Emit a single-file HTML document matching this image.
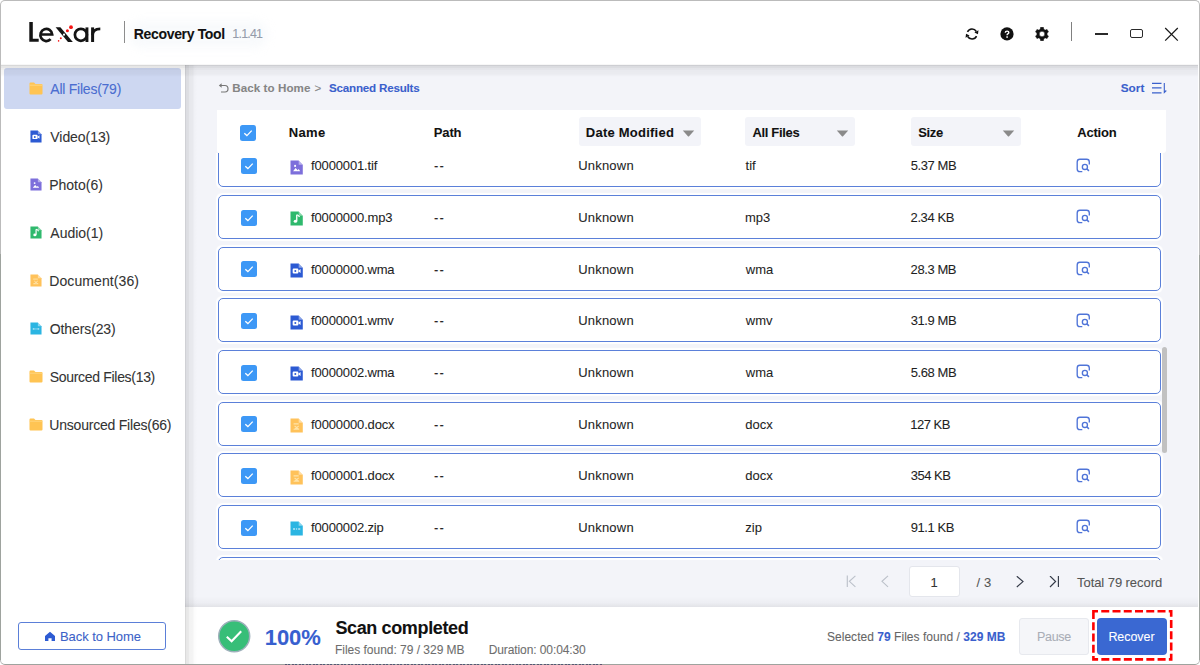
<!DOCTYPE html>
<html><head><meta charset="utf-8">
<style>
*{box-sizing:border-box;margin:0;padding:0}
html,body{width:1200px;height:665px;overflow:hidden;background:#fff;font-family:"Liberation Sans",sans-serif;color:#222}
.a{position:absolute}
div.a{-webkit-text-stroke:0.08px currentColor}
</style></head><body>
<div class="a" style="left:0;top:0;width:1200px;height:65px;background:#fff"></div>
<svg class="a" style="left:0;top:0" width="120" height="60" viewBox="0 0 120 60"><path d="M29.3 22 H32.8 V38.7 H38.7 V41.8 H29.3 Z" fill="#141414"/><path d="M40.4 34.5 H52.2 A5.9 6.1 0 1 0 50.6 39.2" stroke="#141414" stroke-width="2.7" fill="none"/><path d="M55.6 27.2 H60.4 L72.8 42 H68 Z" fill="#141414"/><circle cx="64" cy="34.7" r="1.1" fill="#fff"/><circle cx="71" cy="27.2" r="1.9" fill="#f51414"/><circle cx="67.4" cy="30.8" r="1.5" fill="#f51414"/><circle cx="60.8" cy="38.3" r="1" fill="#f51414"/><circle cx="58.6" cy="40.9" r="0.8" fill="#f51414"/><circle cx="80.9" cy="34.8" r="6" stroke="#141414" stroke-width="2.7" fill="none"/><rect x="85.5" y="27.4" width="2.9" height="14.6" fill="#141414"/><rect x="91.1" y="27.4" width="3" height="14.6" fill="#141414"/><path d="M92.6 35 Q92.6 28.8 100.3 28.8" stroke="#141414" stroke-width="2.7" fill="none"/></svg>
<div class="a" style="left:124px;top:21px;width:1px;height:22px;background:#8a8a8a"></div>
<div class="a" style="left:128px;top:21px;width:140px;height:27px;border-radius:14px;background:rgba(225,230,240,0.22);filter:blur(5px)"></div>
<div class="a" style="left:133.79px;top:23.85px;font-size:14px;line-height:20px;font-weight:700;color:#111;letter-spacing:-0.335px;white-space:nowrap;">Recovery Tool</div>
<div class="a" style="left:232.36px;top:25.37px;font-size:12.5px;line-height:18px;font-weight:400;color:#959cab;letter-spacing:-0.810px;white-space:nowrap;">1.1.41</div>
<svg class="a" style="left:965px;top:27px" width="14" height="14" viewBox="0 0 14 14"><path d="M2.47 4.89 A5.0 5.0 0 0 1 11.33 4.50" stroke="#111" stroke-width="1.5" fill="none"/><path d="M13.50 3.25 L12.93 7.27 L9.38 5.62 Z" fill="#111"/><path d="M11.53 9.11 A5.0 5.0 0 0 1 2.67 9.50" stroke="#111" stroke-width="1.5" fill="none"/><path d="M0.50 10.75 L1.07 6.73 L4.62 8.38 Z" fill="#111"/></svg>
<svg class="a" style="left:1000px;top:27px" width="14" height="14" viewBox="0 0 14 14"><circle cx="7" cy="6.9" r="6.6" fill="#111"/><path d="M5.3 5.7 Q5.3 4.1 7.1 4.1 Q8.8 4.1 8.8 5.5 Q8.8 6.4 7.8 6.9 Q7.1 7.3 7.1 8.2" stroke="#fff" stroke-width="1.45" fill="none"/><rect x="6.3" y="9.3" width="1.6" height="1.5" fill="#fff"/></svg>
<svg class="a" style="left:1035px;top:27px" width="14" height="14" viewBox="0 0 14 14"><path fill-rule="evenodd" fill="#111" stroke="#111" stroke-width="0.5" stroke-linejoin="round" d="M4.50 2.67 L5.31 2.08 L5.59 0.35 L8.41 0.35 L8.69 2.08 L9.50 2.67 L10.41 3.08 L12.05 2.45 L13.47 4.90 L12.10 6.01 L12.00 7.00 L12.10 7.99 L13.47 9.10 L12.05 11.55 L10.41 10.92 L9.50 11.33 L8.69 11.92 L8.41 13.65 L5.59 13.65 L5.31 11.92 L4.50 11.33 L3.59 10.92 L1.95 11.55 L0.53 9.10 L1.90 7.99 L2.00 7.00 L1.90 6.01 L0.53 4.90 L1.95 2.45 L3.59 3.08 Z M7 4.25 A2.75 2.75 0 1 0 7 9.75 A2.75 2.75 0 1 0 7 4.25 Z"/></svg>
<div class="a" style="left:1071px;top:22px;width:1.2px;height:19px;background:#808080"></div>
<div class="a" style="left:1095px;top:33.3px;width:13px;height:1.3px;background:#2a2a2a"></div>
<div class="a" style="left:1130px;top:29.3px;width:13.2px;height:9px;border:1.3px solid #2a2a2a;border-radius:2px"></div>
<svg class="a" style="left:1164px;top:27px" width="15" height="15" viewBox="0 0 15 15"><path d="M1.2 1 L13.8 13.6 M13.8 1 L1.2 13.6" stroke="#1a1a1a" stroke-width="1.25"/></svg>
<div class="a" style="left:0;top:65px;width:185px;height:600px;background:#fff;"></div>
<div class="a" style="left:4px;top:68px;width:177px;height:41px;background:#cdd7f1;border-radius:3px"></div>
<svg class="a" style="left:29px;top:82px" width="14" height="13" viewBox="0 0 14 13"><path d="M0.5 1.5 Q0.5 0.5 1.5 0.5 H5 L6.5 2 H12.5 Q13.5 2 13.5 3 V11.5 Q13.5 12.5 12.5 12.5 H1.5 Q0.5 12.5 0.5 11.5 Z" fill="#ffc453"/><path d="M0.5 3.2 H13.5" stroke="#ffdc8c" stroke-width="0.8"/></svg>
<div class="a" style="left:50.33px;top:79.35px;font-size:14px;line-height:20px;font-weight:400;color:#4a6dd0;letter-spacing:-0.245px;white-space:nowrap;">All Files(79)</div>
<svg class="a" style="left:30px;top:130px" width="12" height="13" viewBox="0 0 13 14" preserveAspectRatio="none"><path d="M0.5 0.5 H8.5 L12.5 4.5 V13.5 H0.5 Z" fill="#2c5ad3"/><path d="M8.5 0.5 V4.5 H12.5 Z" fill="#fff" fill-opacity="0.45"/><rect x="2.6" y="5.2" width="5.6" height="4.6" rx="1" fill="#fff"/><path d="M7.8 7.5 L10.3 5.7 V9.3 Z" fill="#fff"/><circle cx="5.2" cy="7.5" r="1" fill="#2c5ad3"/></svg>
<div class="a" style="left:50.33px;top:127.35px;font-size:14px;line-height:20px;font-weight:400;color:#333;letter-spacing:-0.062px;white-space:nowrap;">Video(13)</div>
<svg class="a" style="left:30px;top:178px" width="12" height="13" viewBox="0 0 13 14" preserveAspectRatio="none"><path d="M0.5 0.5 H8.5 L12.5 4.5 V13.5 H0.5 Z" fill="#7d6fdb"/><path d="M8.5 0.5 V4.5 H12.5 Z" fill="#fff" fill-opacity="0.45"/><path d="M3 10.5 L5.5 7.5 L7.5 9.5 L8.5 8.5 L10 10.5 Z" fill="#fff"/><circle cx="5" cy="5.5" r="1" fill="#fff"/></svg>
<div class="a" style="left:49.28px;top:175.35px;font-size:14px;line-height:20px;font-weight:400;color:#333;letter-spacing:-0.019px;white-space:nowrap;">Photo(6)</div>
<svg class="a" style="left:30px;top:226px" width="12" height="13" viewBox="0 0 13 14" preserveAspectRatio="none"><path d="M0.5 0.5 H8.5 L12.5 4.5 V13.5 H0.5 Z" fill="#2fb96d"/><path d="M8.5 0.5 V4.5 H12.5 Z" fill="#fff" fill-opacity="0.45"/><path d="M6.6 3.5 V9.3" stroke="#fff" stroke-width="1.3"/><path d="M6.6 3.5 Q8.5 4 9.3 5.6" stroke="#fff" stroke-width="1.2" fill="none"/><ellipse cx="5.3" cy="9.6" rx="1.7" ry="1.4" fill="#fff"/></svg>
<div class="a" style="left:50.33px;top:223.35px;font-size:14px;line-height:20px;font-weight:400;color:#333;letter-spacing:-0.020px;white-space:nowrap;">Audio(1)</div>
<svg class="a" style="left:30px;top:274px" width="12" height="13" viewBox="0 0 13 14" preserveAspectRatio="none"><path d="M0.5 0.5 H8.5 L12.5 4.5 V13.5 H0.5 Z" fill="#ffc25a"/><path d="M8.5 0.5 V4.5 H12.5 Z" fill="#fff" fill-opacity="0.45"/><path d="M3.5 5.5 H8.5 M4.5 7.5 L8.5 10.5 M8.5 7.5 L4.5 10.5 M3.5 10.5 H9" stroke="#ffe3a8" stroke-width="1"/></svg>
<div class="a" style="left:49.28px;top:271.35px;font-size:14px;line-height:20px;font-weight:400;color:#333;letter-spacing:0.097px;white-space:nowrap;">Document(36)</div>
<svg class="a" style="left:30px;top:322px" width="12" height="13" viewBox="0 0 13 14" preserveAspectRatio="none"><path d="M0.5 0.5 H8.5 L12.5 4.5 V13.5 H0.5 Z" fill="#2bb5e2"/><path d="M8.5 0.5 V4.5 H12.5 Z" fill="#fff" fill-opacity="0.45"/><path d="M3 7.5 H5 M6 7.5 H7 M8 7.5 H10" stroke="#fff" stroke-width="1"/></svg>
<div class="a" style="left:49.77px;top:319.35px;font-size:14px;line-height:20px;font-weight:400;color:#333;letter-spacing:-0.109px;white-space:nowrap;">Others(23)</div>
<svg class="a" style="left:29px;top:370px" width="14" height="13" viewBox="0 0 14 13"><path d="M0.5 1.5 Q0.5 0.5 1.5 0.5 H5 L6.5 2 H12.5 Q13.5 2 13.5 3 V11.5 Q13.5 12.5 12.5 12.5 H1.5 Q0.5 12.5 0.5 11.5 Z" fill="#ffc453"/><path d="M0.5 3.2 H13.5" stroke="#ffdc8c" stroke-width="0.8"/></svg>
<div class="a" style="left:49.77px;top:367.35px;font-size:14px;line-height:20px;font-weight:400;color:#333;letter-spacing:-0.312px;white-space:nowrap;">Sourced Files(13)</div>
<svg class="a" style="left:29px;top:418px" width="14" height="13" viewBox="0 0 14 13"><path d="M0.5 1.5 Q0.5 0.5 1.5 0.5 H5 L6.5 2 H12.5 Q13.5 2 13.5 3 V11.5 Q13.5 12.5 12.5 12.5 H1.5 Q0.5 12.5 0.5 11.5 Z" fill="#ffc453"/><path d="M0.5 3.2 H13.5" stroke="#ffdc8c" stroke-width="0.8"/></svg>
<div class="a" style="left:49.35px;top:415.35px;font-size:14px;line-height:20px;font-weight:400;color:#333;letter-spacing:-0.217px;white-space:nowrap;">Unsourced Files(66)</div>
<div class="a" style="left:18px;top:622px;width:148px;height:28px;border:1px solid #5b7fd8;border-radius:3px;background:#fff"></div>
<svg class="a" style="left:44px;top:631px" width="12" height="11" viewBox="0 0 12 11"><path d="M6 0.8 L11 5 V10 H7.6 V7.2 H4.4 V10 H1 V5 Z" fill="#2d5bd3"/></svg>
<div class="a" style="left:59.96px;top:627.50px;font-size:13px;line-height:18px;font-weight:400;color:#3c62c8;letter-spacing:-0.065px;white-space:nowrap;">Back to Home</div>
<div class="a" style="left:185px;top:65px;width:1015px;height:542px;background:#f3f4f9"></div>
<svg class="a" style="left:218px;top:83px" width="11" height="11" viewBox="0 0 11 11"><path d="M3 2.5 H7 Q10 2.5 10 5.8 Q10 9 7 9 H3" stroke="#777" stroke-width="1.2" fill="none"/><path d="M0.8 2.5 L3.6 0.3 V4.7 Z" fill="#777"/></svg>
<div class="a" style="left:232.25px;top:80.28px;font-size:11.6px;line-height:16px;font-weight:700;color:#858585;letter-spacing:0.077px;white-space:nowrap;">Back to Home</div>
<div class="a" style="left:314.42px;top:80.28px;font-size:11.6px;line-height:16px;font-weight:400;color:#858585;letter-spacing:0.000px;white-space:nowrap;">&gt;</div>
<div class="a" style="left:328.95px;top:80.28px;font-size:11.6px;line-height:16px;font-weight:700;color:#3a60cc;letter-spacing:-0.188px;white-space:nowrap;">Scanned Results</div>
<div class="a" style="left:1120.65px;top:80.01px;font-size:11.8px;line-height:17px;font-weight:700;color:#3a60cc;letter-spacing:0.077px;white-space:nowrap;">Sort</div>
<svg class="a" style="left:1151px;top:82px" width="16" height="12" viewBox="0 0 16 12"><path d="M1 1.3 H10.5 M1 5.9 H10.5 M1 10.9 H10.5" stroke="#3a60cc" stroke-width="1.2"/><path d="M13.3 1 V10.5 L15.3 8.5" stroke="#3a60cc" stroke-width="1.1" fill="none"/></svg>
<div class="a" style="left:185px;top:153px;width:1000px;height:407px;overflow:hidden">
<div class="a" style="left:33px;top:-9.67px;width:943px;height:44px;border:1px solid #5b80d9;border-radius:5px;background:#fff;box-shadow:0 0 1px 1.2px rgba(255,255,255,0.95)"></div>
<svg class="a" style="left:56px;top:4.930000000000007px" width="16" height="16" viewBox="0 0 16 16"><rect x="0" y="0" width="16" height="16" rx="2.5" fill="#3d98f6"/><path d="M4.3 8.2 L6.9 10.6 L11.7 5.6" stroke="#fff" stroke-width="1.3" fill="none"/></svg>
<svg class="a" style="left:104.69999999999999px;top:6.630000000000024px" width="13.3" height="15" viewBox="0 0 13 14" preserveAspectRatio="none"><path d="M0.5 0.5 H8.5 L12.5 4.5 V13.5 H0.5 Z" fill="#7d6fdb"/><path d="M8.5 0.5 V4.5 H12.5 Z" fill="#fff" fill-opacity="0.45"/><path d="M3 10.5 L5.5 7.5 L7.5 9.5 L8.5 8.5 L10 10.5 Z" fill="#fff"/><circle cx="5" cy="5.5" r="1" fill="#fff"/></svg>
<div class="a" style="left:126.11px;top:3.50px;font-size:13px;line-height:18px;font-weight:400;color:#1f1f1f;letter-spacing:-0.164px;white-space:nowrap;">f0000001.tif</div>
<div class="a" style="left:249.11px;top:3.50px;font-size:13px;line-height:18px;font-weight:400;color:#1f1f1f;letter-spacing:1.060px;white-space:nowrap;">--</div>
<div class="a" style="left:393.23px;top:3.50px;font-size:13px;line-height:18px;font-weight:400;color:#1f1f1f;letter-spacing:0.202px;white-space:nowrap;">Unknown</div>
<div class="a" style="left:560.60px;top:3.50px;font-size:13px;line-height:18px;font-weight:400;color:#1f1f1f;letter-spacing:0.000px;white-space:nowrap;">tif</div>
<div class="a" style="left:725.73px;top:3.50px;font-size:13px;line-height:18px;font-weight:400;color:#1f1f1f;letter-spacing:-0.417px;white-space:nowrap;">5.37 MB</div>
<svg class="a" style="left:891.3px;top:4.730000000000018px" width="15" height="15" viewBox="0 0 15 15"><path d="M6.3 13.6 H3.9 Q1.2 13.6 1.2 10.9 V3.9 Q1.2 1.2 3.9 1.2 H10.6 Q13.3 1.2 13.3 3.9 V6.6" stroke="#4f74d8" stroke-width="1.35" fill="none"/><circle cx="8.9" cy="8.9" r="2.55" stroke="#4f74d8" stroke-width="1.35" fill="none"/><path d="M10.8 10.8 L12.9 12.9" stroke="#4f74d8" stroke-width="1.5"/></svg>
<div class="a" style="left:33px;top:42.00px;width:943px;height:44px;border:1px solid #5b80d9;border-radius:5px;background:#fff;box-shadow:0 0 1px 1.2px rgba(255,255,255,0.95)"></div>
<svg class="a" style="left:56px;top:56.599999999999994px" width="16" height="16" viewBox="0 0 16 16"><rect x="0" y="0" width="16" height="16" rx="2.5" fill="#3d98f6"/><path d="M4.3 8.2 L6.9 10.6 L11.7 5.6" stroke="#fff" stroke-width="1.3" fill="none"/></svg>
<svg class="a" style="left:104.69999999999999px;top:58.30000000000001px" width="13.3" height="15" viewBox="0 0 13 14" preserveAspectRatio="none"><path d="M0.5 0.5 H8.5 L12.5 4.5 V13.5 H0.5 Z" fill="#2fb96d"/><path d="M8.5 0.5 V4.5 H12.5 Z" fill="#fff" fill-opacity="0.45"/><path d="M6.6 3.5 V9.3" stroke="#fff" stroke-width="1.3"/><path d="M6.6 3.5 Q8.5 4 9.3 5.6" stroke="#fff" stroke-width="1.2" fill="none"/><ellipse cx="5.3" cy="9.6" rx="1.7" ry="1.4" fill="#fff"/></svg>
<div class="a" style="left:126.11px;top:55.50px;font-size:13px;line-height:18px;font-weight:400;color:#1f1f1f;letter-spacing:-0.164px;white-space:nowrap;">f0000000.mp3</div>
<div class="a" style="left:249.11px;top:55.50px;font-size:13px;line-height:18px;font-weight:400;color:#1f1f1f;letter-spacing:1.060px;white-space:nowrap;">--</div>
<div class="a" style="left:393.23px;top:55.50px;font-size:13px;line-height:18px;font-weight:400;color:#1f1f1f;letter-spacing:0.202px;white-space:nowrap;">Unknown</div>
<div class="a" style="left:559.95px;top:55.50px;font-size:13px;line-height:18px;font-weight:400;color:#1f1f1f;letter-spacing:0.000px;white-space:nowrap;">mp3</div>
<div class="a" style="left:725.60px;top:55.50px;font-size:13px;line-height:18px;font-weight:400;color:#1f1f1f;letter-spacing:-0.417px;white-space:nowrap;">2.34 KB</div>
<svg class="a" style="left:891.3px;top:56.400000000000006px" width="15" height="15" viewBox="0 0 15 15"><path d="M6.3 13.6 H3.9 Q1.2 13.6 1.2 10.9 V3.9 Q1.2 1.2 3.9 1.2 H10.6 Q13.3 1.2 13.3 3.9 V6.6" stroke="#4f74d8" stroke-width="1.35" fill="none"/><circle cx="8.9" cy="8.9" r="2.55" stroke="#4f74d8" stroke-width="1.35" fill="none"/><path d="M10.8 10.8 L12.9 12.9" stroke="#4f74d8" stroke-width="1.5"/></svg>
<div class="a" style="left:33px;top:93.67px;width:943px;height:44px;border:1px solid #5b80d9;border-radius:5px;background:#fff;box-shadow:0 0 1px 1.2px rgba(255,255,255,0.95)"></div>
<svg class="a" style="left:56px;top:108.27000000000004px" width="16" height="16" viewBox="0 0 16 16"><rect x="0" y="0" width="16" height="16" rx="2.5" fill="#3d98f6"/><path d="M4.3 8.2 L6.9 10.6 L11.7 5.6" stroke="#fff" stroke-width="1.3" fill="none"/></svg>
<svg class="a" style="left:104.69999999999999px;top:109.97000000000003px" width="13.3" height="15" viewBox="0 0 13 14" preserveAspectRatio="none"><path d="M0.5 0.5 H8.5 L12.5 4.5 V13.5 H0.5 Z" fill="#2c5ad3"/><path d="M8.5 0.5 V4.5 H12.5 Z" fill="#fff" fill-opacity="0.45"/><rect x="2.6" y="5.2" width="5.6" height="4.6" rx="1" fill="#fff"/><path d="M7.8 7.5 L10.3 5.7 V9.3 Z" fill="#fff"/><circle cx="5.2" cy="7.5" r="1" fill="#2c5ad3"/></svg>
<div class="a" style="left:126.11px;top:107.50px;font-size:13px;line-height:18px;font-weight:400;color:#1f1f1f;letter-spacing:-0.164px;white-space:nowrap;">f0000000.wma</div>
<div class="a" style="left:249.11px;top:107.50px;font-size:13px;line-height:18px;font-weight:400;color:#1f1f1f;letter-spacing:1.060px;white-space:nowrap;">--</div>
<div class="a" style="left:393.23px;top:107.50px;font-size:13px;line-height:18px;font-weight:400;color:#1f1f1f;letter-spacing:0.202px;white-space:nowrap;">Unknown</div>
<div class="a" style="left:560.80px;top:107.50px;font-size:13px;line-height:18px;font-weight:400;color:#1f1f1f;letter-spacing:0.000px;white-space:nowrap;">wma</div>
<div class="a" style="left:725.60px;top:107.50px;font-size:13px;line-height:18px;font-weight:400;color:#1f1f1f;letter-spacing:-0.417px;white-space:nowrap;">28.3 MB</div>
<svg class="a" style="left:891.3px;top:108.07px" width="15" height="15" viewBox="0 0 15 15"><path d="M6.3 13.6 H3.9 Q1.2 13.6 1.2 10.9 V3.9 Q1.2 1.2 3.9 1.2 H10.6 Q13.3 1.2 13.3 3.9 V6.6" stroke="#4f74d8" stroke-width="1.35" fill="none"/><circle cx="8.9" cy="8.9" r="2.55" stroke="#4f74d8" stroke-width="1.35" fill="none"/><path d="M10.8 10.8 L12.9 12.9" stroke="#4f74d8" stroke-width="1.5"/></svg>
<div class="a" style="left:33px;top:145.34px;width:943px;height:44px;border:1px solid #5b80d9;border-radius:5px;background:#fff;box-shadow:0 0 1px 1.2px rgba(255,255,255,0.95)"></div>
<svg class="a" style="left:56px;top:159.94000000000005px" width="16" height="16" viewBox="0 0 16 16"><rect x="0" y="0" width="16" height="16" rx="2.5" fill="#3d98f6"/><path d="M4.3 8.2 L6.9 10.6 L11.7 5.6" stroke="#fff" stroke-width="1.3" fill="none"/></svg>
<svg class="a" style="left:104.69999999999999px;top:161.64000000000004px" width="13.3" height="15" viewBox="0 0 13 14" preserveAspectRatio="none"><path d="M0.5 0.5 H8.5 L12.5 4.5 V13.5 H0.5 Z" fill="#2c5ad3"/><path d="M8.5 0.5 V4.5 H12.5 Z" fill="#fff" fill-opacity="0.45"/><rect x="2.6" y="5.2" width="5.6" height="4.6" rx="1" fill="#fff"/><path d="M7.8 7.5 L10.3 5.7 V9.3 Z" fill="#fff"/><circle cx="5.2" cy="7.5" r="1" fill="#2c5ad3"/></svg>
<div class="a" style="left:126.11px;top:158.50px;font-size:13px;line-height:18px;font-weight:400;color:#1f1f1f;letter-spacing:-0.164px;white-space:nowrap;">f0000001.wmv</div>
<div class="a" style="left:249.11px;top:158.50px;font-size:13px;line-height:18px;font-weight:400;color:#1f1f1f;letter-spacing:1.060px;white-space:nowrap;">--</div>
<div class="a" style="left:393.23px;top:158.50px;font-size:13px;line-height:18px;font-weight:400;color:#1f1f1f;letter-spacing:0.202px;white-space:nowrap;">Unknown</div>
<div class="a" style="left:560.80px;top:158.50px;font-size:13px;line-height:18px;font-weight:400;color:#1f1f1f;letter-spacing:0.000px;white-space:nowrap;">wmv</div>
<div class="a" style="left:725.73px;top:158.50px;font-size:13px;line-height:18px;font-weight:400;color:#1f1f1f;letter-spacing:-0.417px;white-space:nowrap;">31.9 MB</div>
<svg class="a" style="left:891.3px;top:159.74px" width="15" height="15" viewBox="0 0 15 15"><path d="M6.3 13.6 H3.9 Q1.2 13.6 1.2 10.9 V3.9 Q1.2 1.2 3.9 1.2 H10.6 Q13.3 1.2 13.3 3.9 V6.6" stroke="#4f74d8" stroke-width="1.35" fill="none"/><circle cx="8.9" cy="8.9" r="2.55" stroke="#4f74d8" stroke-width="1.35" fill="none"/><path d="M10.8 10.8 L12.9 12.9" stroke="#4f74d8" stroke-width="1.5"/></svg>
<div class="a" style="left:33px;top:197.01px;width:943px;height:44px;border:1px solid #5b80d9;border-radius:5px;background:#fff;box-shadow:0 0 1px 1.2px rgba(255,255,255,0.95)"></div>
<svg class="a" style="left:56px;top:211.61px" width="16" height="16" viewBox="0 0 16 16"><rect x="0" y="0" width="16" height="16" rx="2.5" fill="#3d98f6"/><path d="M4.3 8.2 L6.9 10.6 L11.7 5.6" stroke="#fff" stroke-width="1.3" fill="none"/></svg>
<svg class="a" style="left:104.69999999999999px;top:213.31px" width="13.3" height="15" viewBox="0 0 13 14" preserveAspectRatio="none"><path d="M0.5 0.5 H8.5 L12.5 4.5 V13.5 H0.5 Z" fill="#2c5ad3"/><path d="M8.5 0.5 V4.5 H12.5 Z" fill="#fff" fill-opacity="0.45"/><rect x="2.6" y="5.2" width="5.6" height="4.6" rx="1" fill="#fff"/><path d="M7.8 7.5 L10.3 5.7 V9.3 Z" fill="#fff"/><circle cx="5.2" cy="7.5" r="1" fill="#2c5ad3"/></svg>
<div class="a" style="left:126.11px;top:210.50px;font-size:13px;line-height:18px;font-weight:400;color:#1f1f1f;letter-spacing:-0.164px;white-space:nowrap;">f0000002.wma</div>
<div class="a" style="left:249.11px;top:210.50px;font-size:13px;line-height:18px;font-weight:400;color:#1f1f1f;letter-spacing:1.060px;white-space:nowrap;">--</div>
<div class="a" style="left:393.23px;top:210.50px;font-size:13px;line-height:18px;font-weight:400;color:#1f1f1f;letter-spacing:0.202px;white-space:nowrap;">Unknown</div>
<div class="a" style="left:560.80px;top:210.50px;font-size:13px;line-height:18px;font-weight:400;color:#1f1f1f;letter-spacing:0.000px;white-space:nowrap;">wma</div>
<div class="a" style="left:725.73px;top:210.50px;font-size:13px;line-height:18px;font-weight:400;color:#1f1f1f;letter-spacing:-0.417px;white-space:nowrap;">5.68 MB</div>
<svg class="a" style="left:891.3px;top:211.40999999999997px" width="15" height="15" viewBox="0 0 15 15"><path d="M6.3 13.6 H3.9 Q1.2 13.6 1.2 10.9 V3.9 Q1.2 1.2 3.9 1.2 H10.6 Q13.3 1.2 13.3 3.9 V6.6" stroke="#4f74d8" stroke-width="1.35" fill="none"/><circle cx="8.9" cy="8.9" r="2.55" stroke="#4f74d8" stroke-width="1.35" fill="none"/><path d="M10.8 10.8 L12.9 12.9" stroke="#4f74d8" stroke-width="1.5"/></svg>
<div class="a" style="left:33px;top:248.68px;width:943px;height:44px;border:1px solid #5b80d9;border-radius:5px;background:#fff;box-shadow:0 0 1px 1.2px rgba(255,255,255,0.95)"></div>
<svg class="a" style="left:56px;top:263.2800000000001px" width="16" height="16" viewBox="0 0 16 16"><rect x="0" y="0" width="16" height="16" rx="2.5" fill="#3d98f6"/><path d="M4.3 8.2 L6.9 10.6 L11.7 5.6" stroke="#fff" stroke-width="1.3" fill="none"/></svg>
<svg class="a" style="left:104.69999999999999px;top:264.9800000000001px" width="13.3" height="15" viewBox="0 0 13 14" preserveAspectRatio="none"><path d="M0.5 0.5 H8.5 L12.5 4.5 V13.5 H0.5 Z" fill="#ffc25a"/><path d="M8.5 0.5 V4.5 H12.5 Z" fill="#fff" fill-opacity="0.45"/><path d="M3.5 5.5 H8.5 M4.5 7.5 L8.5 10.5 M8.5 7.5 L4.5 10.5 M3.5 10.5 H9" stroke="#ffe3a8" stroke-width="1"/></svg>
<div class="a" style="left:126.11px;top:262.50px;font-size:13px;line-height:18px;font-weight:400;color:#1f1f1f;letter-spacing:-0.150px;white-space:nowrap;">f0000000.docx</div>
<div class="a" style="left:249.11px;top:262.50px;font-size:13px;line-height:18px;font-weight:400;color:#1f1f1f;letter-spacing:1.060px;white-space:nowrap;">--</div>
<div class="a" style="left:393.23px;top:262.50px;font-size:13px;line-height:18px;font-weight:400;color:#1f1f1f;letter-spacing:0.202px;white-space:nowrap;">Unknown</div>
<div class="a" style="left:560.28px;top:262.50px;font-size:13px;line-height:18px;font-weight:400;color:#1f1f1f;letter-spacing:0.000px;white-space:nowrap;">docx</div>
<div class="a" style="left:725.27px;top:262.50px;font-size:13px;line-height:18px;font-weight:400;color:#1f1f1f;letter-spacing:-0.500px;white-space:nowrap;">127 KB</div>
<svg class="a" style="left:891.3px;top:263.08000000000004px" width="15" height="15" viewBox="0 0 15 15"><path d="M6.3 13.6 H3.9 Q1.2 13.6 1.2 10.9 V3.9 Q1.2 1.2 3.9 1.2 H10.6 Q13.3 1.2 13.3 3.9 V6.6" stroke="#4f74d8" stroke-width="1.35" fill="none"/><circle cx="8.9" cy="8.9" r="2.55" stroke="#4f74d8" stroke-width="1.35" fill="none"/><path d="M10.8 10.8 L12.9 12.9" stroke="#4f74d8" stroke-width="1.5"/></svg>
<div class="a" style="left:33px;top:300.35px;width:943px;height:44px;border:1px solid #5b80d9;border-radius:5px;background:#fff;box-shadow:0 0 1px 1.2px rgba(255,255,255,0.95)"></div>
<svg class="a" style="left:56px;top:314.95000000000005px" width="16" height="16" viewBox="0 0 16 16"><rect x="0" y="0" width="16" height="16" rx="2.5" fill="#3d98f6"/><path d="M4.3 8.2 L6.9 10.6 L11.7 5.6" stroke="#fff" stroke-width="1.3" fill="none"/></svg>
<svg class="a" style="left:104.69999999999999px;top:316.65000000000003px" width="13.3" height="15" viewBox="0 0 13 14" preserveAspectRatio="none"><path d="M0.5 0.5 H8.5 L12.5 4.5 V13.5 H0.5 Z" fill="#ffc25a"/><path d="M8.5 0.5 V4.5 H12.5 Z" fill="#fff" fill-opacity="0.45"/><path d="M3.5 5.5 H8.5 M4.5 7.5 L8.5 10.5 M8.5 7.5 L4.5 10.5 M3.5 10.5 H9" stroke="#ffe3a8" stroke-width="1"/></svg>
<div class="a" style="left:126.11px;top:313.50px;font-size:13px;line-height:18px;font-weight:400;color:#1f1f1f;letter-spacing:-0.150px;white-space:nowrap;">f0000001.docx</div>
<div class="a" style="left:249.11px;top:313.50px;font-size:13px;line-height:18px;font-weight:400;color:#1f1f1f;letter-spacing:1.060px;white-space:nowrap;">--</div>
<div class="a" style="left:393.23px;top:313.50px;font-size:13px;line-height:18px;font-weight:400;color:#1f1f1f;letter-spacing:0.202px;white-space:nowrap;">Unknown</div>
<div class="a" style="left:560.28px;top:313.50px;font-size:13px;line-height:18px;font-weight:400;color:#1f1f1f;letter-spacing:0.000px;white-space:nowrap;">docx</div>
<div class="a" style="left:725.73px;top:313.50px;font-size:13px;line-height:18px;font-weight:400;color:#1f1f1f;letter-spacing:-0.500px;white-space:nowrap;">354 KB</div>
<svg class="a" style="left:891.3px;top:314.75px" width="15" height="15" viewBox="0 0 15 15"><path d="M6.3 13.6 H3.9 Q1.2 13.6 1.2 10.9 V3.9 Q1.2 1.2 3.9 1.2 H10.6 Q13.3 1.2 13.3 3.9 V6.6" stroke="#4f74d8" stroke-width="1.35" fill="none"/><circle cx="8.9" cy="8.9" r="2.55" stroke="#4f74d8" stroke-width="1.35" fill="none"/><path d="M10.8 10.8 L12.9 12.9" stroke="#4f74d8" stroke-width="1.5"/></svg>
<div class="a" style="left:33px;top:352.02px;width:943px;height:44px;border:1px solid #5b80d9;border-radius:5px;background:#fff;box-shadow:0 0 1px 1.2px rgba(255,255,255,0.95)"></div>
<svg class="a" style="left:56px;top:366.62px" width="16" height="16" viewBox="0 0 16 16"><rect x="0" y="0" width="16" height="16" rx="2.5" fill="#3d98f6"/><path d="M4.3 8.2 L6.9 10.6 L11.7 5.6" stroke="#fff" stroke-width="1.3" fill="none"/></svg>
<svg class="a" style="left:104.69999999999999px;top:368.31999999999994px" width="13.3" height="15" viewBox="0 0 13 14" preserveAspectRatio="none"><path d="M0.5 0.5 H8.5 L12.5 4.5 V13.5 H0.5 Z" fill="#2bb5e2"/><path d="M8.5 0.5 V4.5 H12.5 Z" fill="#fff" fill-opacity="0.45"/><path d="M3 7.5 H5 M6 7.5 H7 M8 7.5 H10" stroke="#fff" stroke-width="1"/></svg>
<div class="a" style="left:126.11px;top:365.50px;font-size:13px;line-height:18px;font-weight:400;color:#1f1f1f;letter-spacing:-0.164px;white-space:nowrap;">f0000002.zip</div>
<div class="a" style="left:249.11px;top:365.50px;font-size:13px;line-height:18px;font-weight:400;color:#1f1f1f;letter-spacing:1.060px;white-space:nowrap;">--</div>
<div class="a" style="left:393.23px;top:365.50px;font-size:13px;line-height:18px;font-weight:400;color:#1f1f1f;letter-spacing:0.202px;white-space:nowrap;">Unknown</div>
<div class="a" style="left:560.28px;top:365.50px;font-size:13px;line-height:18px;font-weight:400;color:#1f1f1f;letter-spacing:0.000px;white-space:nowrap;">zip</div>
<div class="a" style="left:725.66px;top:365.50px;font-size:13px;line-height:18px;font-weight:400;color:#1f1f1f;letter-spacing:-0.417px;white-space:nowrap;">91.1 KB</div>
<svg class="a" style="left:891.3px;top:366.41999999999996px" width="15" height="15" viewBox="0 0 15 15"><path d="M6.3 13.6 H3.9 Q1.2 13.6 1.2 10.9 V3.9 Q1.2 1.2 3.9 1.2 H10.6 Q13.3 1.2 13.3 3.9 V6.6" stroke="#4f74d8" stroke-width="1.35" fill="none"/><circle cx="8.9" cy="8.9" r="2.55" stroke="#4f74d8" stroke-width="1.35" fill="none"/><path d="M10.8 10.8 L12.9 12.9" stroke="#4f74d8" stroke-width="1.5"/></svg>
<div class="a" style="left:33px;top:403.69px;width:943px;height:44px;border:1px solid #5b80d9;border-radius:5px;background:#fff;box-shadow:0 0 1px 1.2px rgba(255,255,255,0.95)"></div>
<svg class="a" style="left:56px;top:418.2900000000001px" width="16" height="16" viewBox="0 0 16 16"><rect x="0" y="0" width="16" height="16" rx="2.5" fill="#3d98f6"/><path d="M4.3 8.2 L6.9 10.6 L11.7 5.6" stroke="#fff" stroke-width="1.3" fill="none"/></svg>
<svg class="a" style="left:104.69999999999999px;top:419.99px" width="13.3" height="15" viewBox="0 0 13 14" preserveAspectRatio="none"><path d="M0.5 0.5 H8.5 L12.5 4.5 V13.5 H0.5 Z" fill="#2bb5e2"/><path d="M8.5 0.5 V4.5 H12.5 Z" fill="#fff" fill-opacity="0.45"/><path d="M3 7.5 H5 M6 7.5 H7 M8 7.5 H10" stroke="#fff" stroke-width="1"/></svg>
<div class="a" style="left:126.11px;top:417.50px;font-size:13px;line-height:18px;font-weight:400;color:#1f1f1f;letter-spacing:-0.164px;white-space:nowrap;">f0000003.zip</div>
<div class="a" style="left:249.11px;top:417.50px;font-size:13px;line-height:18px;font-weight:400;color:#1f1f1f;letter-spacing:1.060px;white-space:nowrap;">--</div>
<div class="a" style="left:393.23px;top:417.50px;font-size:13px;line-height:18px;font-weight:400;color:#1f1f1f;letter-spacing:0.202px;white-space:nowrap;">Unknown</div>
<div class="a" style="left:560.28px;top:417.50px;font-size:13px;line-height:18px;font-weight:400;color:#1f1f1f;letter-spacing:0.000px;white-space:nowrap;">zip</div>
<div class="a" style="left:725.27px;top:417.50px;font-size:13px;line-height:18px;font-weight:400;color:#1f1f1f;letter-spacing:-0.417px;white-space:nowrap;">12.0 KB</div>
<svg class="a" style="left:891.3px;top:418.09000000000003px" width="15" height="15" viewBox="0 0 15 15"><path d="M6.3 13.6 H3.9 Q1.2 13.6 1.2 10.9 V3.9 Q1.2 1.2 3.9 1.2 H10.6 Q13.3 1.2 13.3 3.9 V6.6" stroke="#4f74d8" stroke-width="1.35" fill="none"/><circle cx="8.9" cy="8.9" r="2.55" stroke="#4f74d8" stroke-width="1.35" fill="none"/><path d="M10.8 10.8 L12.9 12.9" stroke="#4f74d8" stroke-width="1.5"/></svg>
</div>
<div class="a" style="left:1161.5px;top:346.5px;width:5px;height:106px;background:#c1c1c1;border-radius:3px"></div>
<div class="a" style="left:217px;top:110px;width:949px;height:43px;background:#fff;border-radius:0 0 3px 3px"></div>
<svg class="a" style="left:240px;top:125px" width="16" height="16" viewBox="0 0 16 16"><rect x="0" y="0" width="16" height="16" rx="2.5" fill="#3d98f6"/><path d="M4.3 8.2 L6.9 10.6 L11.7 5.6" stroke="#fff" stroke-width="1.3" fill="none"/></svg>
<div class="a" style="left:288.85px;top:123.80px;font-size:13px;line-height:18px;font-weight:700;color:#111;letter-spacing:0.292px;white-space:nowrap;">Name</div>
<div class="a" style="left:433.85px;top:123.80px;font-size:13px;line-height:18px;font-weight:700;color:#111;letter-spacing:-0.173px;white-space:nowrap;">Path</div>
<div class="a" style="left:579px;top:117px;width:122px;height:29px;background:#f3f4f9;border-radius:3px"></div>
<div class="a" style="left:585.86px;top:123.80px;font-size:13px;line-height:18px;font-weight:700;color:#111;letter-spacing:0.231px;white-space:nowrap;">Date Modified</div>
<svg class="a" style="left:682px;top:130px" width="13" height="7" viewBox="0 0 13 7"><path d="M0.8 0.6 H12.2 L7.1 6.2 Q6.5 6.9 5.9 6.2 Z" fill="#8a8a8a"/></svg>
<div class="a" style="left:745px;top:117px;width:110px;height:29px;background:#f3f4f9;border-radius:3px"></div>
<div class="a" style="left:752.38px;top:123.80px;font-size:13px;line-height:18px;font-weight:700;color:#111;letter-spacing:-0.314px;white-space:nowrap;">All Files</div>
<svg class="a" style="left:836px;top:130px" width="13" height="7" viewBox="0 0 13 7"><path d="M0.8 0.6 H12.2 L7.1 6.2 Q6.5 6.9 5.9 6.2 Z" fill="#8a8a8a"/></svg>
<div class="a" style="left:911px;top:117px;width:110px;height:29px;background:#f3f4f9;border-radius:3px"></div>
<div class="a" style="left:918.31px;top:123.80px;font-size:13px;line-height:18px;font-weight:700;color:#111;letter-spacing:-0.385px;white-space:nowrap;">Size</div>
<svg class="a" style="left:1002px;top:130px" width="13" height="7" viewBox="0 0 13 7"><path d="M0.8 0.6 H12.2 L7.1 6.2 Q6.5 6.9 5.9 6.2 Z" fill="#8a8a8a"/></svg>
<div class="a" style="left:1077.17px;top:123.80px;font-size:13px;line-height:18px;font-weight:700;color:#111;letter-spacing:-0.165px;white-space:nowrap;">Action</div>
<svg class="a" style="left:845px;top:575px" width="13" height="14" viewBox="0 0 13 14"><path d="M2.3 0.6 V11.9 M10.4 0.8 L4.4 6.3 L10.4 11.8" stroke="#bcc1ca" stroke-width="1.15" fill="none"/></svg>
<svg class="a" style="left:880px;top:575px" width="10" height="14" viewBox="0 0 10 14"><path d="M8 0.8 L2 6.3 L8 11.8" stroke="#bcc1ca" stroke-width="1.15" fill="none"/></svg>
<div class="a" style="left:909px;top:566px;width:51px;height:31px;background:#fff;border:1px solid #e4e6ec;border-radius:3px"></div>
<div class="a" style="left:930.52px;top:574.00px;font-size:13px;line-height:18px;font-weight:400;color:#333;letter-spacing:0.000px;white-space:nowrap;">1</div>
<div class="a" style="left:976.60px;top:574.00px;font-size:13px;line-height:18px;font-weight:400;color:#555;letter-spacing:0.078px;white-space:nowrap;">/ 3</div>
<svg class="a" style="left:1015px;top:576px" width="10" height="12" viewBox="0 0 10 12"><path d="M1.8 0.2 L8 5.6 L1.8 11" stroke="#343a48" stroke-width="1.15" fill="none"/></svg>
<svg class="a" style="left:1048px;top:576px" width="13" height="13" viewBox="0 0 13 13"><path d="M10.4 -0.4 V11 M2 0 L7.6 5.5 L2 11" stroke="#343a48" stroke-width="1.15" fill="none"/></svg>
<div class="a" style="left:1077.04px;top:574.00px;font-size:13px;line-height:18px;font-weight:400;color:#555;letter-spacing:-0.064px;white-space:nowrap;">Total 79 record</div>
<div class="a" style="left:185px;top:607px;width:1015px;height:58px;background:#fff"></div>
<svg class="a" style="left:217px;top:619px" width="34" height="34" viewBox="0 0 34 34"><circle cx="17.2" cy="17.2" r="15.5" fill="#37be78" stroke="#9eb0bb" stroke-width="1.5"/><path d="M9.8 17.8 L14.6 22.2 L24.2 12.2" stroke="#fff" stroke-width="2.1" fill="none"/></svg>
<div class="a" style="left:264.87px;top:622.18px;font-size:22px;line-height:31px;font-weight:700;color:#3760cf;letter-spacing:-0.113px;white-space:nowrap;">100%</div>
<div class="a" style="left:335.46px;top:616.26px;font-size:18px;line-height:25px;font-weight:700;color:#111;letter-spacing:-0.373px;white-space:nowrap;">Scan completed</div>
<div class="a" style="left:335.04px;top:641.94px;font-size:12px;line-height:17px;font-weight:400;color:#6e6e6e;letter-spacing:-0.023px;white-space:nowrap;">Files found: 79 / 329 MB</div>
<div class="a" style="left:488.64px;top:641.94px;font-size:12px;line-height:17px;font-weight:400;color:#6e6e6e;letter-spacing:-0.092px;white-space:nowrap;">Duration: 00:04:30</div>
<div class="a" style="left:826.96px;top:628.94px;font-size:12px;line-height:17px;font-weight:400;color:#666;letter-spacing:0.035px;white-space:nowrap;">Selected <b style="color:#3a5fcd">79</b> Files found / <b style="color:#3a5fcd">329 MB</b></div>
<div class="a" style="left:1019px;top:618px;width:70px;height:37px;background:#f5f6f9;border:1px solid #e7e9ee;border-radius:3px"></div>
<div class="a" style="left:1037.00px;top:627.97px;font-size:12.5px;line-height:18px;font-weight:400;color:#a9adb6;letter-spacing:-0.319px;white-space:nowrap;">Pause</div>
<div class="a" style="left:1097px;top:618px;width:70px;height:37px;background:#3a68d2;border-radius:4px"></div>
<div class="a" style="left:1108.40px;top:627.97px;font-size:12.5px;line-height:18px;font-weight:400;color:#fff;letter-spacing:-0.052px;white-space:nowrap;">Recover</div>
<svg class="a" style="left:1090px;top:607px" width="86" height="57" viewBox="0 0 86 57"><rect x="3.4" y="4.2" width="77.8" height="48.2" fill="none" stroke="#ff0000" stroke-width="2.6" stroke-dasharray="8 3.25" stroke-dashoffset="3.4" stroke-linecap="butt"/></svg>
<div class="a" style="left:185px;top:596px;width:1015px;height:11px;background:linear-gradient(rgba(0,0,0,0),rgba(0,0,0,0.025) 60%,rgba(0,0,0,0.07))"></div>
<div class="a" style="left:185px;top:65px;width:15px;height:600px;background:linear-gradient(to right,rgba(0,0,0,0.15) 0,rgba(0,0,0,0.14) 1px,rgba(0,0,0,0.095) 1.5px,rgba(0,0,0,0.085) 4px,rgba(0,0,0,0.05) 4.5px,rgba(0,0,0,0.045) 8px,rgba(0,0,0,0.015) 9px,rgba(0,0,0,0) 12px)"></div>
<div class="a" style="left:0;top:64px;width:1200px;height:13px;background:linear-gradient(rgba(0,0,0,0.03) 0,rgba(0,0,0,0.03) 1px,rgba(0,0,0,0.16) 1px,rgba(0,0,0,0.15) 2px,rgba(0,0,0,0.10) 2px,rgba(0,0,0,0.095) 4px,rgba(0,0,0,0.065) 4px,rgba(0,0,0,0.06) 6px,rgba(0,0,0,0.045) 6px,rgba(0,0,0,0.035) 10px,rgba(0,0,0,0.0) 13px)"></div>
<div class="a" style="left:1198px;top:64px;width:1px;height:543px;background:#fff"></div>
<div class="a" style="left:0;top:0;width:1200px;height:665px;border:1px solid;border-color:#bbbbbb #bbbbbb #9ea39e #bbbbbb;border-radius:5px;box-shadow:0 0 0 30px #fff"></div>
<div class="a" style="left:0;top:254px;width:1px;height:406px;background:#9ea39e"></div>
<div class="a" style="left:1199px;top:255px;width:1px;height:405px;background:#9ea39e"></div>
<div class="a" style="left:285px;top:664px;width:317px;height:1px;z-index:5;background:repeating-linear-gradient(to right,#5a5470 0 2px,#9aa09a 2px 3px,#4d5a78 3px 5px,#a3a8a3 5px 7px)"></div>
</body></html>
